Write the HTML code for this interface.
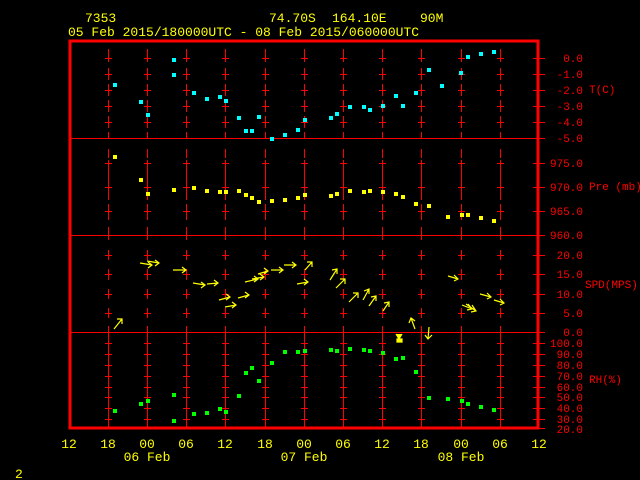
<!DOCTYPE html>
<html><head><meta charset="utf-8"><style>
html,body{margin:0;padding:0;background:#000;width:640px;height:480px;overflow:hidden}
svg{display:block}
text{font-family:"Liberation Mono",monospace}
</style></head><body>
<svg width="640" height="480" viewBox="0 0 640 480" xmlns="http://www.w3.org/2000/svg">
<defs>
<path id="col" stroke="#ff0000" stroke-width="1" shape-rendering="crispEdges" fill="none" d="M0.5 49V62M0.5 68V80M0.5 84V96M0.5 100V112M0.5 116V128M0.5 132V138M-3 58.5H4M-3 74.5H4M-3 90.5H4M-3 106.5H4M-3 122.5H4
M0.5 149V158M0.5 160V200M0.5 204V220M0.5 227V235M-3 163.5H4M-3 187.5H4M-3 211.5H4
M0.5 235V240M0.5 250V260M0.5 269V280M0.5 289V299M0.5 308V318M0.5 326V332M-3 255.5H4M-3 274.5H4M-3 294.5H4M-3 313.5H4
M0.5 332V428M-3 343.5H4M-3 354.5H4M-3 365.5H4M-3 376.5H4M-3 387.5H4M-3 397.5H4M-3 408.5H4M-3 419.5H4"/>
</defs>
<g fill="#ffff00" font-size="13">
<text x="85" y="22">7353</text>
<text x="269" y="22">74.70S</text>
<text x="332" y="22">164.10E</text>
<text x="420" y="22">90M</text>
<text x="68" y="36">05 Feb 2015/180000UTC - 08 Feb 2015/060000UTC</text>
<g text-anchor="middle">
<text x="69" y="448">12</text><text x="108" y="448">18</text><text x="147" y="448">00</text><text x="186" y="448">06</text><text x="225" y="448">12</text><text x="265" y="448">18</text><text x="304" y="448">00</text><text x="343" y="448">06</text><text x="382" y="448">12</text><text x="421" y="448">18</text><text x="461" y="448">00</text><text x="500" y="448">06</text><text x="539" y="448">12</text>
<text x="147" y="461">06 Feb</text><text x="304" y="461">07 Feb</text><text x="461" y="461">08 Feb</text>
</g>
<text x="15" y="478">2</text>
</g>
<use href="#col" x="108"/><use href="#col" x="147"/><use href="#col" x="186"/><use href="#col" x="225"/><use href="#col" x="265"/><use href="#col" x="304"/><use href="#col" x="343"/><use href="#col" x="382"/><use href="#col" x="421"/><use href="#col" x="461"/><use href="#col" x="500"/>
<g stroke="#ff0000" fill="none" shape-rendering="crispEdges">
<rect x="70" y="41" width="468" height="387" stroke-width="3"/>
<line x1="70" y1="138.5" x2="545" y2="138.5" stroke-width="1"/>
<line x1="70" y1="235.5" x2="545" y2="235.5" stroke-width="1"/>
<line x1="70" y1="332.5" x2="545" y2="332.5" stroke-width="1"/>
<path stroke-width="1" d="M533 58.5H545M533 74.5H545M533 90.5H545M533 106.5H545M533 122.5H545M533 163.5H545M533 187.5H545M533 211.5H545M533 255.5H545M533 274.5H545M533 294.5H545M533 313.5H545M533 343.5H545M533 354.5H545M533 365.5H545M533 376.5H545M533 387.5H545M533 397.5H545M533 408.5H545M533 419.5H545M533 428.5H545"/>
</g>
<g fill="#ff0000" font-size="11" text-anchor="end">
<text x="583" y="62">0.0</text><text x="583" y="78">-1.0</text><text x="583" y="94">-2.0</text><text x="583" y="110">-3.0</text><text x="583" y="126">-4.0</text><text x="583" y="142">-5.0</text>
<text x="583" y="167">975.0</text><text x="583" y="191">970.0</text><text x="583" y="215">965.0</text><text x="583" y="239">960.0</text>
<text x="583" y="259">20.0</text><text x="583" y="278">15.0</text><text x="583" y="298">10.0</text><text x="583" y="317">5.0</text><text x="583" y="336">0.0</text>
<text x="583" y="347">100.0</text><text x="583" y="358">90.0</text><text x="583" y="369">80.0</text><text x="583" y="380">70.0</text><text x="583" y="391">60.0</text><text x="583" y="401">50.0</text><text x="583" y="412">40.0</text><text x="583" y="423">30.0</text><text x="583" y="433">20.0</text>
</g>
<g fill="#ff0000" font-size="11">
<text x="589" y="93">T(C)</text><text x="589" y="190">Pre (mb)</text><text x="585" y="288">SPD(MPS)</text><text x="589" y="383">RH(%)</text>
</g>
<path fill="#00ffff" d="M113 83h4v4h-4zM139 100h4v4h-4zM146 113h4v4h-4zM172 58h4v4h-4zM172 73h4v4h-4zM192 91h4v4h-4zM205 97h4v4h-4zM218 95h4v4h-4zM224 99h4v4h-4zM237 116h4v4h-4zM244 129h4v4h-4zM250 129h4v4h-4zM257 115h4v4h-4zM270 137h4v4h-4zM283 133h4v4h-4zM296 128h4v4h-4zM303 118h4v4h-4zM329 116h4v4h-4zM335 112h4v4h-4zM348 105h4v4h-4zM362 105h4v4h-4zM368 108h4v4h-4zM381 104h4v4h-4zM394 94h4v4h-4zM401 104h4v4h-4zM414 91h4v4h-4zM427 68h4v4h-4zM440 84h4v4h-4zM459 71h4v4h-4zM466 55h4v4h-4zM479 52h4v4h-4zM492 50h4v4h-4z"/>
<path fill="#ffff00" d="M113 155h4v4h-4zM139 178h4v4h-4zM146 192h4v4h-4zM172 188h4v4h-4zM192 186h4v4h-4zM205 189h4v4h-4zM218 190h4v4h-4zM224 190h4v4h-4zM237 189h4v4h-4zM244 193h4v4h-4zM250 196h4v4h-4zM257 200h4v4h-4zM270 199h4v4h-4zM283 198h4v4h-4zM296 196h4v4h-4zM303 193h4v4h-4zM329 194h4v4h-4zM335 192h4v4h-4zM348 189h4v4h-4zM362 190h4v4h-4zM368 189h4v4h-4zM381 190h4v4h-4zM394 192h4v4h-4zM401 195h4v4h-4zM414 202h4v4h-4zM427 204h4v4h-4zM446 215h4v4h-4zM460 213h4v4h-4zM466 213h4v4h-4zM479 216h4v4h-4zM492 219h4v4h-4z"/>
<path fill="#00ff00" d="M113 409h4v4h-4zM139 402h4v4h-4zM146 399h4v4h-4zM172 393h4v4h-4zM172 419h4v4h-4zM192 412h4v4h-4zM205 411h4v4h-4zM218 407h4v4h-4zM224 410h4v4h-4zM237 394h4v4h-4zM244 371h4v4h-4zM250 366h4v4h-4zM257 379h4v4h-4zM270 361h4v4h-4zM283 350h4v4h-4zM296 350h4v4h-4zM303 349h4v4h-4zM329 348h4v4h-4zM335 349h4v4h-4zM348 347h4v4h-4zM362 348h4v4h-4zM368 349h4v4h-4zM381 351h4v4h-4zM394 357h4v4h-4zM401 356h4v4h-4zM414 370h4v4h-4zM427 396h4v4h-4zM446 397h4v4h-4zM460 399h4v4h-4zM466 402h4v4h-4zM479 405h4v4h-4zM492 408h4v4h-4z"/>
<path stroke="#ffff00" stroke-width="1.2" fill="none" d="
M114 329L122 319M117 319L122 319L122 324
M140 263L152 265M148 262L152 265L148 268
M147 261L159 263M155 260L159 263L155 266
M173 270L186 270M182 267L186 270L182 273
M193 283L205 285M201 282L205 285L201 288
M207 284L218 283M214 280L218 283L214 286
M219 300L230 297M226 294L230 297L226 300
M225 307L236 305M232 302L236 305L232 308
M238 298L249 295M245 292L249 295L245 298
M245 282L258 279M254 276L258 279L254 282
M252 279L264 277M260 274L264 277L260 280
M258 274L268 271M264 268L268 271L264 274
M271 270L283 270M279 267L283 270L279 273
M284 265L296 265M292 262L296 265L292 268
M305 270L312 262M307 262L312 262L312 267
M297 284L308 282M304 279L308 282L304 285
M330 280L337 269M332 270L337 269L337 274
M336 288L345 279M340 279L345 279L345 284
M349 302L358 293M353 293L358 293L358 298
M363 300L369 289M364 291L369 289L369 294
M369 306L376 296M371 297L376 296L376 301
M383 311L389 302M384 303L389 302L389 307
M415 329L411 318M409 323L411 318L415 321
M429 327L428 339M425 335L428 339L432 335
M448 276L458 279M454 275L458 279L454 281
M462 305L472 309M468 304L472 309L467 310
M466 304L476 311M472 305L476 311L471 312
M480 294L491 297M487 293L491 297L487 299
M494 300L504 303M500 299L504 303L500 305"/>
<path d="M396 334L399 339L402 334M397 339h5v3h-5z" stroke="#ffff00" stroke-width="1.2" fill="#ffff00"/>
</svg>
</body></html>
